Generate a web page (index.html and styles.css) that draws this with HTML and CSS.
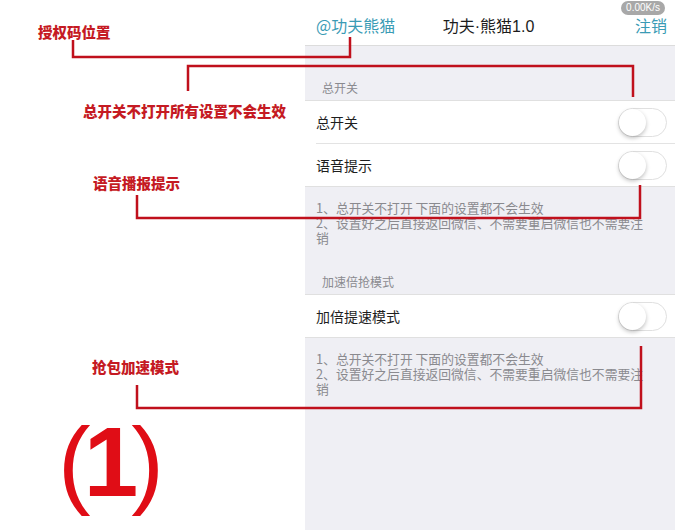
FILE: index.html
```html
<!DOCTYPE html>
<html lang="zh-CN">
<head>
    <meta charset="UTF-8">
    <meta name="viewport" content="width=device-width, initial-scale=1.0">
    <title>功夫·熊猫1.0</title>
    <link rel="stylesheet" href="styles.css">
</head>
<body>
    <div class="page">
        <div class="gutter"></div>

        <div class="phone">
            <div class="topbar">
                <span class="link">@功夫熊猫</span>
                <span class="title">功夫·熊猫1.0</span>
                <span class="link link-right">注销</span>
                <span class="speed">0.00K/s</span>
            </div>

            <div class="settings">
                <div class="group-title">总开关</div>
                <div class="cells">
                    <div class="cell">
                        <span>总开关</span>
                        <span class="switch"></span>
                    </div>
                    <div class="cell">
                        <span>语音提示</span>
                        <span class="switch"></span>
                    </div>
                </div>
                <div class="group-foot">
                    1、总开关不打开 下面的设置都不会生效<br>
                    2、设置好之后直接返回微信、不需要重启微信也不需要注<br>
                    销
                </div>

                <div class="group-title">加速倍抢模式</div>
                <div class="cells">
                    <div class="cell">
                        <span>加倍提速模式</span>
                        <span class="switch"></span>
                    </div>
                </div>
                <div class="group-foot">
                    1、总开关不打开 下面的设置都不会生效<br>
                    2、设置好之后直接返回微信、不需要重启微信也不需要注<br>
                    销
                </div>
            </div>
        </div>

        <!-- 标注 -->
        <svg class="callouts" width="675" height="530" viewBox="0 0 675 530">
            <polyline points="73,40 73,57 350,57 350,37" />
            <polyline points="188,91 188,66 633,66 633,97" />
            <polyline points="137,195 137,218 640,218 640,185" />
            <polyline points="137,385 137,408 641,408 641,346" />
        </svg>
        <span class="note note-auth">授权码位置</span>
        <span class="note note-main">总开关不打开所有设置不会生效</span>
        <span class="note note-voice">语音播报提示</span>
        <span class="note note-speed">抢包加速模式</span>
        <div class="figure-no"><span class="paren">(</span>1<span class="paren">)</span></div>
    </div>
</body>
</html>
```

FILE: styles.css
```css
body {
    margin: 0;
    background: #fff;
    font-family: "Noto Sans CJK SC", "Noto Sans", sans-serif;
}
.page {
    position: relative;
    width: 675px;
    height: 530px;
    display: flex;
    overflow: hidden;
}
.gutter {
    width: 305px;
    flex: none;
}
.phone {
    flex: 1;
    background: #efeff4;
    display: flex;
    flex-direction: column;
}
.topbar {
    position: relative;
    height: 46px;
    box-sizing: border-box;
    background: #fff;
    border-bottom: 1px solid #dcdcdc;
    display: grid;
    grid-template-columns: 1fr auto 1fr;
    align-items: center;
    padding: 4px 8px 0 11px;
    font-size: 16px;
    color: #1c1c1c;
}
.topbar .title {
    font-family: "Liberation Sans", "Noto Sans CJK SC", sans-serif;
    margin-left: -6px;
}
.topbar .link {
    color: #3a9bb5;
}
.topbar .link-right {
    justify-self: end;
}
.speed {
    position: absolute;
    top: 1px;
    right: 10px;
    background: #a8a8a8;
    color: #fff;
    font-family: "Liberation Sans", sans-serif;
    font-size: 10px;
    line-height: 14px;
    padding: 0 5px;
    border-radius: 7px;
}
.settings {
    padding-top: 10px;
}
.group-title {
    padding: 24px 17px 4px;
    font-size: 12px;
    line-height: 16px;
    color: #8a8a8f;
}
.cells {
    background: #fff;
    border-top: 1px solid #e0e0e0;
    border-bottom: 1px solid #e0e0e0;
}
.cell {
    height: 42px;
    margin-left: 11px;
    padding-right: 8px;
    display: flex;
    align-items: center;
    justify-content: space-between;
    font-size: 14px;
    color: #1e1e1e;
}
.cell + .cell {
    border-top: 1px solid #e3e3e3;
}
.switch {
    position: relative;
    width: 47px;
    height: 27px;
    border-radius: 15px;
    border: 1.5px solid #e0e0e0;
    background: #fff;
}
.switch::before {
    content: "";
    position: absolute;
    left: 0;
    top: 0;
    width: 27px;
    height: 27px;
    border-radius: 50%;
    background: #fff;
    box-shadow: 0 2px 4px rgba(0, 0, 0, 0.25);
}
.group-foot {
    padding: 13px 11px 5px;
    font-size: 12.8px;
    line-height: 15px;
    color: #8a8a8f;
    white-space: nowrap;
}
.callouts {
    position: absolute;
    left: 0;
    top: 0;
    pointer-events: none;
}
.callouts polyline {
    fill: none;
    stroke: #c0101c;
    stroke-width: 2.5;
}
.note {
    position: absolute;
    font-size: 14.5px;
    line-height: 15px;
    font-weight: 900;
    color: #c51a23;
    white-space: nowrap;
}
.note-auth { left: 38px; top: 24px; }
.note-main { left: 83px; top: 103px; }
.note-voice { left: 93px; top: 175px; }
.note-speed { left: 92px; top: 359px; }
.figure-no {
    position: absolute;
    left: 58px;
    top: 413px;
    font-family: "Liberation Sans", sans-serif;
    font-weight: bold;
    font-size: 98px;
    line-height: 1;
    color: #e00d16;
    letter-spacing: -7px;
}
.figure-no .paren {
    font-weight: normal;
}
```
